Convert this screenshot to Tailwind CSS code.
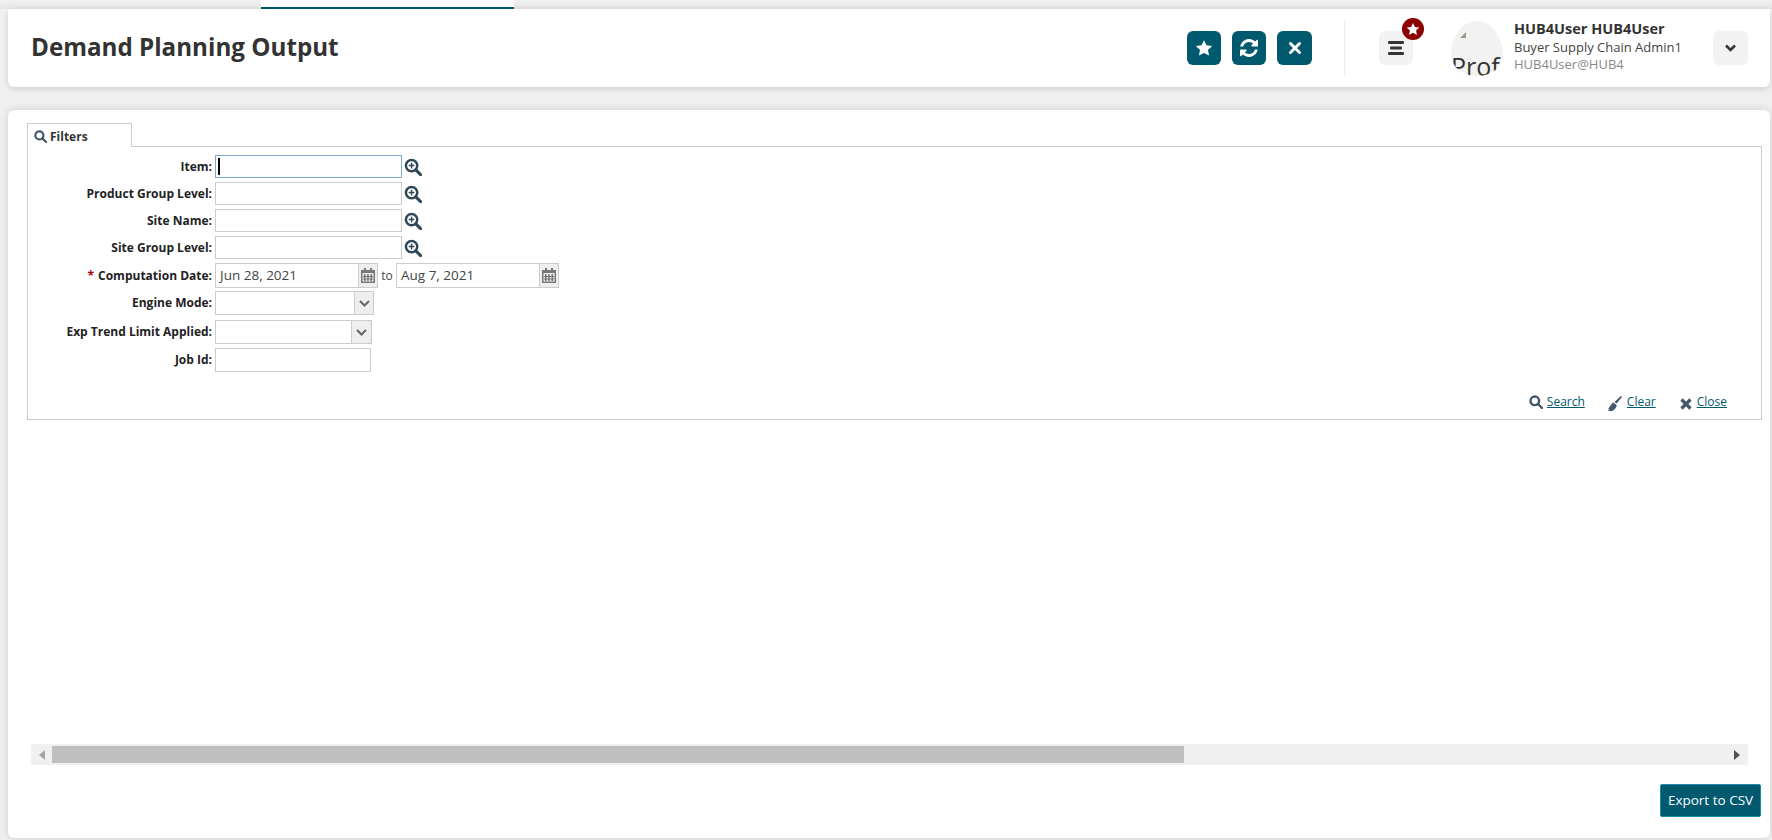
<!DOCTYPE html>
<html lang="en">
<head>
  <meta charset="UTF-8" />
  <title>Demand Planning Output</title>
  <script src="https://cdn.jsdelivr.net/npm/@tailwindcss/browser@4"></script>
</head>
<body class="bg-[#f0f0f0] font-['Open_Sans',sans-serif] text-[#333] h-[840px] overflow-hidden">

  <!-- tab strip -->
  <div class="h-[9px] pl-[261px] bg-gradient-to-b from-[#f2f2f2] to-[#e4e4e4]">
    <div class="w-[253px] h-[9px] bg-white border-b-2 border-[#00596e]"></div>
  </div>

  <!-- header -->
  <header class="ml-2 mr-[2px] h-[78px] bg-white rounded-b-md shadow-[0_2px_6px_rgba(0,0,0,0.14)] flex items-center pl-[23px]">
    <h1 class="text-[24.200px] font-bold text-[#333] flex-1 leading-none -mt-[2px]">Demand Planning Output</h1>
    <div class="flex gap-[11px]">
      <button class="w-[34px] h-[34px] rounded-md bg-[#00596e] flex items-center justify-center">
        <svg class="w-[18px] h-[18px]" viewBox="0 0 24 24" fill="#fff"><path d="M12 1.500l3.300 6.900 7.500 1-5.500 5.200 1.400 7.500L12 18.500l-6.700 3.600 1.400-7.500L1.200 9.400l7.500-1z"/></svg>
      </button>
      <button class="w-[34px] h-[34px] rounded-md bg-[#00596e] flex items-center justify-center">
        <svg class="w-[18px] h-[18px]" viewBox="0 0 1536 1536" fill="#fff"><path d="M1511 928q0 5-1 7-64 268-268 434.5t-478 166.5q-146 0-282.5-55t-243.5-157l-129 129q-19 19-45 19t-45-19-19-45v-448q0-26 19-45t45-19h448q26 0 45 19t19 45-19 45l-137 137q71 66 161 102t187 36q134 0 250-65t186-179q11-17 53-117 8-23 30-23h192q13 0 22.5 9.5t9.5 22.5zm25-800v448q0 26-19 45t-45 19h-448q-26 0-45-19t-19-45 19-45l138-138q-148-137-349-137-134 0-250 65t-186 179q-11 17-53 117-8 23-30 23h-199q-13 0-22.5-9.5t-9.5-22.5v-7q65-268 270-434.5t480-166.5q146 0 284 55.5t245 156.5l130-129q19-19 45-19t45 19 19 45z"/></svg>
      </button>
      <button class="w-[35px] h-[34px] rounded-md bg-[#00596e] flex items-center justify-center">
        <svg class="w-[14px] h-[14px]" viewBox="0 0 14 14" stroke="#fff" stroke-width="3" stroke-linecap="round"><path d="M2.500 2.500l9 9M11.500 2.500l-9 9"/></svg>
      </button>
    </div>
    <div class="w-px h-[56px] bg-[#ececec] ml-[32px]"></div>
    <div class="relative ml-[34px]">
      <button class="w-[34px] h-[34px] rounded-md bg-[#f2f2f2] flex items-center justify-center">
        <svg class="w-[18px] h-[16px]" viewBox="0 0 18 16" fill="#333"><rect x="1" y="1" width="16" height="3" rx="1"/><rect x="3" y="6.500" width="12" height="3" rx="1"/><rect x="1" y="12" width="16" height="3" rx="1"/></svg>
      </button>
      <span class="absolute -top-[13px] -right-[11px] w-[22px] h-[22px] rounded-full bg-[#8b0000] flex items-center justify-center">
        <svg class="w-[14px] h-[14px]" viewBox="0 0 24 24" fill="#fff"><path d="M12 1.500l3.300 6.900 7.500 1-5.500 5.200 1.400 7.500L12 18.500l-6.700 3.600 1.400-7.500L1.200 9.400l7.500-1z"/></svg>
      </span>
    </div>
    <div class="relative w-[52px] h-[55px] ml-[38px] rounded-[50%_50%_50%_50%/62%_62%_38%_38%] bg-[#f2f2f2] overflow-hidden">
      <svg class="absolute left-[9px] top-[11px] w-[6px] h-[6px]" viewBox="0 0 6 6"><path d="M6 0v6H0z" fill="#9a9a9a"/><path d="M6 3v3H3z" fill="#7cb26a"/></svg>
      <span class="absolute left-0 top-[29px] text-[25px] leading-[32px] text-[#333]">Prof</span>
    </div>
    <div class="ml-[11px] w-[199px] -mt-[4px]">
      <div class="text-[14.500px] leading-[18px] font-bold text-[#333]">HUB4User HUB4User</div>
      <div class="text-[13px] leading-[18px] text-[#444]">Buyer Supply Chain Admin1</div>
      <div class="text-[13px] leading-[17px] text-[#888]">HUB4User@HUB4</div>
    </div>
    <button class="w-[35px] h-[34px] rounded-md bg-[#f2f2f2] flex items-center justify-center">
      <svg class="w-[11px] h-[8px]" viewBox="0 0 11 8" fill="none" stroke="#333" stroke-width="2.500"><path d="M1 1.500l4.500 4.500 4.500-4.500"/></svg>
    </button>
    <div class="w-[22px]"></div>
  </header>

  <!-- main card -->
  <main class="ml-2 mr-[2px] mt-[23px] h-[728px] bg-white rounded-md shadow-[0_0_8px_rgba(0,0,0,0.15)] pt-[13px] pl-[19px] pr-2 flex flex-col">
    <div class="h-[23px] flex">
      <div class="w-[105px] h-[24px] bg-white border border-b-0 border-[#ccc] relative z-10 flex items-center pl-[6px] gap-[3px] pt-[2px]">
        <svg class="w-[13px] h-[13px]" viewBox="0 0 14 14" fill="none" stroke="#44586a" stroke-width="2.400"><circle cx="5.800" cy="5.800" r="4.300"/><path d="M9 9l4 4" stroke-linecap="round"/></svg>
        <span class="text-[12px] font-bold text-[#333]">Filters</span>
      </div>
    </div>
    <section class="h-[274px] border border-[#ccc] flex flex-col pt-[6px]">
      <div class="flex flex-col text-[12px] font-bold text-[#222]">
        <div class="flex items-center h-[27px]">
          <label class="w-[184px] text-right mr-[3px]">Item:</label>
          <div class="w-[187px] h-[23px] border border-[#7fa9d1] flex items-center pl-[2px]"><span class="w-[2px] h-[17px] bg-black"></span></div>
          <svg class="w-[18px] h-[18px] ml-[2px]" viewBox="0 0 19 19" fill="none" stroke="#2f4858" stroke-width="2.600"><circle cx="8" cy="8" r="6"/><path d="M12.500 12.500l5 5" stroke-width="3.200" stroke-linecap="round"/><path d="M8 5v6M5 8h6" stroke-width="1.500"/></svg>
        </div>
        <div class="flex items-center h-[27px]">
          <label class="w-[184px] text-right mr-[3px]">Product Group Level:</label>
          <div class="w-[187px] h-[23px] border border-[#ccc]"></div>
          <svg class="w-[18px] h-[18px] ml-[2px]" viewBox="0 0 19 19" fill="none" stroke="#2f4858" stroke-width="2.600"><circle cx="8" cy="8" r="6"/><path d="M12.500 12.500l5 5" stroke-width="3.200" stroke-linecap="round"/><path d="M8 5v6M5 8h6" stroke-width="1.500"/></svg>
        </div>
        <div class="flex items-center h-[27px]">
          <label class="w-[184px] text-right mr-[3px]">Site Name:</label>
          <div class="w-[187px] h-[23px] border border-[#ccc]"></div>
          <svg class="w-[18px] h-[18px] ml-[2px]" viewBox="0 0 19 19" fill="none" stroke="#2f4858" stroke-width="2.600"><circle cx="8" cy="8" r="6"/><path d="M12.500 12.500l5 5" stroke-width="3.200" stroke-linecap="round"/><path d="M8 5v6M5 8h6" stroke-width="1.500"/></svg>
        </div>
        <div class="flex items-center h-[27px]">
          <label class="w-[184px] text-right mr-[3px]">Site Group Level:</label>
          <div class="w-[187px] h-[23px] border border-[#ccc]"></div>
          <svg class="w-[18px] h-[18px] ml-[2px]" viewBox="0 0 19 19" fill="none" stroke="#2f4858" stroke-width="2.600"><circle cx="8" cy="8" r="6"/><path d="M12.500 12.500l5 5" stroke-width="3.200" stroke-linecap="round"/><path d="M8 5v6M5 8h6" stroke-width="1.500"/></svg>
        </div>
        <div class="flex items-center h-[29px]">
          <label class="w-[184px] text-right mr-[3px]"><span class="text-[#a00] mr-1">*</span>Computation Date:</label>
          <div class="w-[144px] h-[25px] border border-[#ccc] pl-1 flex items-center text-[13.500px] font-normal text-[#444]">Jun 28, 2021</div>
          <div class="w-[19px] h-[25px] bg-[#eee] border-b border-r border-t border-[#ccc] flex items-center justify-center">
            <svg class="w-[14px] h-[15px]" viewBox="0 0 14 15" fill="#777"><path d="M3 0h2v2h4V0h2v2h3v13H0V2h3zM1.500 5v8.500h11V5z"/><path d="M3 6h1.500v7H3zM6.200 6h1.500v7H6.200zM9.500 6H11v7H9.500zM2 8h10v1H2zM2 10.500h10v1H2z"/></svg>
          </div>
          <span class="w-[18px] text-center text-[12px] font-normal text-[#444]">to</span>
          <div class="w-[144px] h-[25px] border border-[#ccc] pl-1 flex items-center text-[13.500px] font-normal text-[#444]">Aug 7, 2021</div>
          <div class="w-[19px] h-[25px] bg-[#eee] border-b border-r border-t border-[#ccc] flex items-center justify-center">
            <svg class="w-[14px] h-[15px]" viewBox="0 0 14 15" fill="#777"><path d="M3 0h2v2h4V0h2v2h3v13H0V2h3zM1.500 5v8.500h11V5z"/><path d="M3 6h1.500v7H3zM6.200 6h1.500v7H6.200zM9.500 6H11v7H9.500zM2 8h10v1H2zM2 10.500h10v1H2z"/></svg>
          </div>
        </div>
        <div class="flex items-center h-[26px]">
          <label class="w-[184px] text-right mr-[3px]">Engine Mode:</label>
          <div class="w-[140px] h-[24px] border border-[#ccc]"></div>
          <div class="w-[19px] h-[24px] bg-[#eee] border-b border-r border-t border-[#ccc] flex items-center justify-center">
            <svg class="w-[11px] h-[7px]" viewBox="0 0 11 7" fill="none" stroke="#666" stroke-width="2"><path d="M1 1l4.500 4.500L10 1"/></svg>
          </div>
        </div>
        <div class="flex items-center h-[32px]">
          <label class="w-[184px] text-right mr-[3px]">Exp Trend Limit Applied:</label>
          <div class="w-[137px] h-[24px] border border-[#ccc]"></div>
          <div class="w-[20px] h-[24px] bg-[#eee] border-b border-r border-t border-[#ccc] flex items-center justify-center">
            <svg class="w-[11px] h-[7px]" viewBox="0 0 11 7" fill="none" stroke="#666" stroke-width="2"><path d="M1 1l4.500 4.500L10 1"/></svg>
          </div>
        </div>
        <div class="flex items-center h-[24px]">
          <label class="w-[184px] text-right mr-[3px]">Job Id:</label>
          <div class="w-[156px] h-[24px] border border-[#ccc]"></div>
        </div>
      </div>
      <div class="mt-auto mb-2 flex justify-end items-center pr-[34px] text-[12px] text-[#00596e]">
        <svg class="w-[14px] h-[14px] mr-[4px]" viewBox="0 0 14 14" fill="none" stroke="#44586a" stroke-width="2.400"><circle cx="5.800" cy="5.800" r="4.300"/><path d="M9 9l4 4" stroke-linecap="round"/></svg>
        <a class="underline">Search</a>
        <svg class="w-[15px] h-[15px] ml-[22px] mr-[5px] mt-[2px]" viewBox="0 0 14 14" fill="#44586a"><path d="M13 0l1 1-5 6-2-1.500z"/><path d="M6 6l3 2.500c0 2-1.500 4.500-4 5.500H1l1.500-2-2 .5C2.500 11 3 8 6 6z"/></svg>
        <a class="underline">Clear</a>
        <svg class="w-[12px] h-[12px] ml-[24px] mr-[5px] mt-[3px]" viewBox="0 0 12 12" stroke="#44586a" stroke-width="3.200"><path d="M1.500 1.500l9 9M10.500 1.500l-9 9"/></svg>
        <a class="underline">Close</a>
      </div>
    </section>

    <!-- horizontal scrollbar -->
    <div class="mt-[324px] ml-[4px] w-[1717px] h-[21px] bg-[#f0f0f0] flex items-center">
      <div class="w-[21px] flex justify-center"><span class="border-y-[5px] border-y-transparent border-r-[6px] border-r-[#a3a3a3]"></span></div>
      <div class="w-[1132px] h-[17px] bg-[#bfbfbf]"></div>
      <div class="flex-1 flex justify-end pr-[8px]"><span class="border-y-[5px] border-y-transparent border-l-[6px] border-l-[#505050]"></span></div>
    </div>

    <div class="mt-[19px] flex justify-end pr-[1px]">
      <button class="w-[101px] h-[33px] bg-[#00596e] border border-[#1a8ba8] rounded-[2px] text-[13.500px] text-white">Export to CSV</button>
    </div>
  </main>
</body>
</html>
